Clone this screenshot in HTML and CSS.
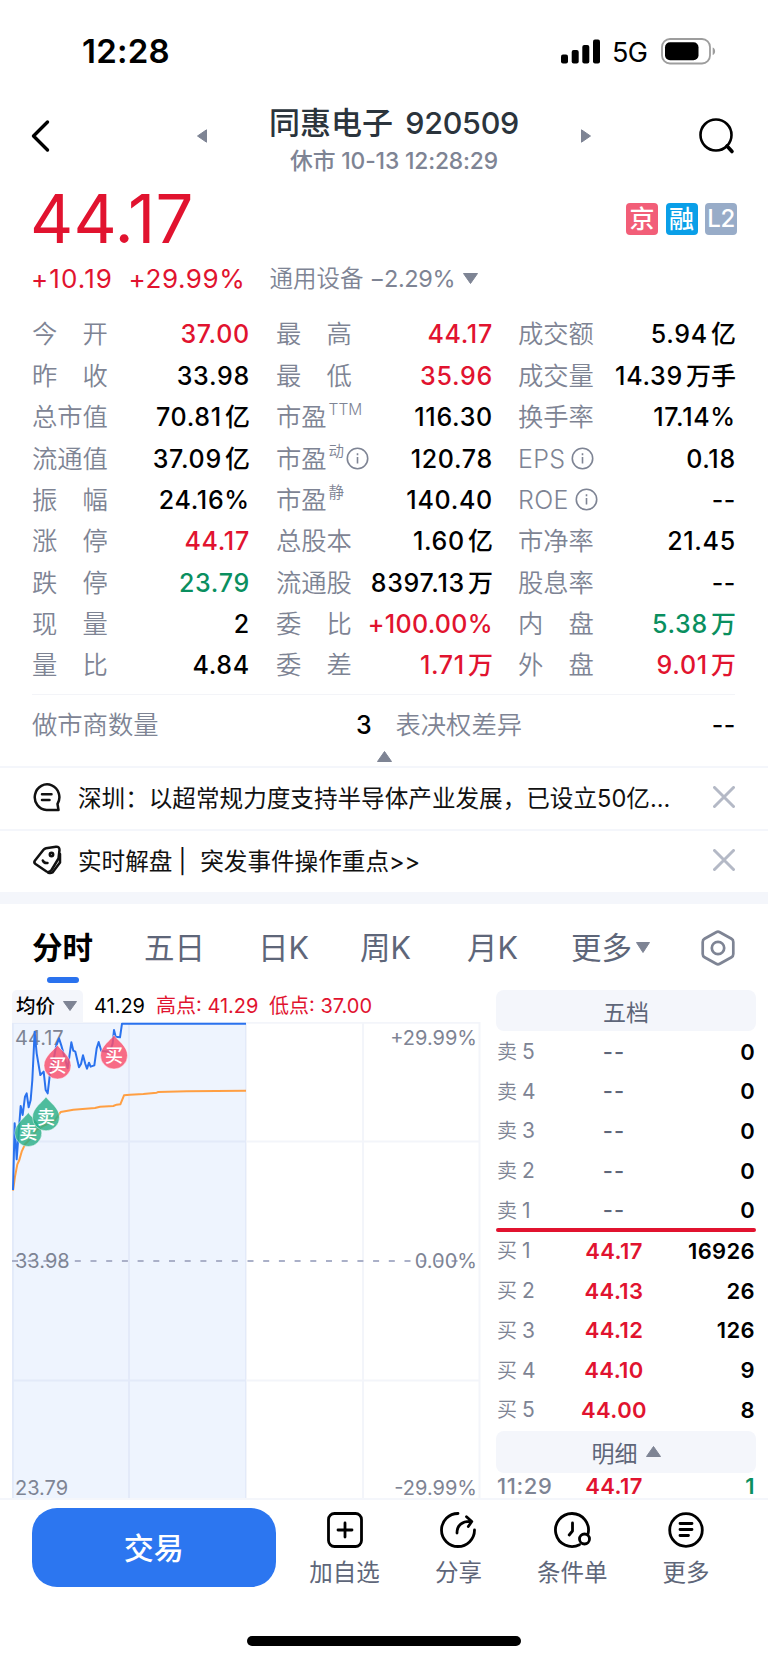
FILE: index.html
```html
<!DOCTYPE html>
<html lang="zh-CN">
<head>
<meta charset="utf-8">
<title>同惠电子 920509</title>
<link rel="stylesheet" href="styles.css">
</head>
<body>
<div class="status">
  <span class="clock">12:28</span>
  <div class="status-right">
    <svg class="signal" width="39" height="25" viewBox="0 0 39 25"><rect x="0" y="15.5" width="7" height="9" rx="2"/><rect x="10.7" y="11" width="7" height="13.5" rx="2"/><rect x="21.3" y="6" width="7" height="18.5" rx="2"/><rect x="32" y="0.5" width="7" height="24" rx="2"/></svg>
    <span class="net">5G</span>
    <svg class="battery" width="55" height="27" viewBox="0 0 55 27"><rect x="1" y="1" width="48" height="24.5" rx="8" fill="none" stroke="#9d9d9d" stroke-width="1.8"/><rect x="4" y="4.2" width="33.5" height="18" rx="5"/><path d="M51.7 9.500c3.200 1 3.200 6.500 0 7.500z" fill="#9d9d9d"/></svg>
  </div>
</div>

<header class="header">
  <svg class="back" width="22" height="36" viewBox="0 0 22 36"><path d="M18.500 4 4.500 18 18.500 32" fill="none" stroke="#000" stroke-width="3.400" stroke-linecap="round" stroke-linejoin="round"/></svg>
  <svg class="prev" width="10" height="14" viewBox="0 0 10 14"><path d="M9.500.800v12.400L.5 7z" class="tri"/></svg>
  <div class="title-box">
    <div class="title">同惠电子 <span class="code">920509</span></div>
    <div class="subtitle">休市 <span>10-13 12:28:29</span></div>
  </div>
  <svg class="next" width="10" height="14" viewBox="0 0 10 14"><path d="M.5.800v12.400L9.500 7z" class="tri"/></svg>
  <svg class="search" width="38" height="38" viewBox="0 0 38 38" fill="none" stroke="#000" stroke-linecap="round"><circle cx="18" cy="18" r="15.500" stroke-width="2.600"/><path d="m29 29 5 5.500" stroke-width="3.600"/></svg>
</header>

<section class="price-row">
  <span class="price">44.17</span>
  <div class="tags"><span class="tag jing">京</span><span class="tag rong">融</span><span class="tag level">L2</span></div>
</section>
<section class="change-row">
  <span class="chg a">+10.19</span><span class="chg b">+29.99%</span>
  <span class="sector">通用设备</span><span class="sector-v">−2.29%</span>
  <svg width="15" height="11" viewBox="0 0 15 11"><path d="M.5.500h14L7.500 10.500z" class="tri"/></svg>
</section>

<section class="quote">
  <dl class="col">
    <div><dt>今　开</dt><dd class="red">37.00</dd></div>
    <div><dt>昨　收</dt><dd>33.98</dd></div>
    <div><dt>总市值</dt><dd>70.81<i>亿</i></dd></div>
    <div><dt>流通值</dt><dd>37.09<i>亿</i></dd></div>
    <div><dt>振　幅</dt><dd>24.16%</dd></div>
    <div><dt>涨　停</dt><dd class="red">44.17</dd></div>
    <div><dt>跌　停</dt><dd class="green">23.79</dd></div>
    <div><dt>现　量</dt><dd>2</dd></div>
    <div><dt>量　比</dt><dd>4.84</dd></div>
  </dl>
  <dl class="col">
    <div><dt>最　高</dt><dd class="red">44.17</dd></div>
    <div><dt>最　低</dt><dd class="red">35.96</dd></div>
    <div><dt>市盈<sup>TTM</sup></dt><dd>116.30</dd></div>
    <div><dt>市盈<sup>动</sup><svg class="info" width="23" height="23" viewBox="0 0 23 23"><circle cx="11.500" cy="11.500" r="10.200"/><path d="M11.500 10v6.500M11.500 6.200v2"/></svg></dt><dd>120.78</dd></div>
    <div><dt>市盈<sup>静</sup></dt><dd>140.40</dd></div>
    <div><dt>总股本</dt><dd>1.60<i>亿</i></dd></div>
    <div><dt>流通股</dt><dd>8397.13<i>万</i></dd></div>
    <div><dt>委　比</dt><dd class="red long">+100.00%</dd></div>
    <div><dt>委　差</dt><dd class="red">1.71<i>万</i></dd></div>
  </dl>
  <dl class="col">
    <div><dt>成交额</dt><dd>5.94<i>亿</i></dd></div>
    <div><dt>成交量</dt><dd>14.39<i>万手</i></dd></div>
    <div><dt>换手率</dt><dd>17.14%</dd></div>
    <div><dt><span class="lat">EPS</span><svg class="info gap" width="23" height="23" viewBox="0 0 23 23"><circle cx="11.500" cy="11.500" r="10.200"/><path d="M11.500 10v6.500M11.500 6.200v2"/></svg></dt><dd>0.18</dd></div>
    <div><dt><span class="lat">ROE</span><svg class="info gap" width="23" height="23" viewBox="0 0 23 23"><circle cx="11.500" cy="11.500" r="10.200"/><path d="M11.500 10v6.500M11.500 6.200v2"/></svg></dt><dd class="dash">--</dd></div>
    <div><dt>市净率</dt><dd>21.45</dd></div>
    <div><dt>股息率</dt><dd class="dash">--</dd></div>
    <div><dt>内　盘</dt><dd class="green">5.38<i>万</i></dd></div>
    <div><dt>外　盘</dt><dd class="red">9.01<i>万</i></dd></div>
  </dl>
</section>
<dl class="extra">
  <div><dt>做市商数量</dt><dd>3</dd></div>
  <div><dt>表决权差异</dt><dd class="dash">--</dd></div>
</dl>
<div class="collapse"><svg width="15" height="11" viewBox="0 0 15 11"><path d="M.5 10.500h14L7.500.500z" class="tri"/></svg></div>

<div class="news">
  <svg width="30" height="30" viewBox="0 0 30 30" fill="none" stroke="#111" stroke-width="2.500" stroke-linecap="round" stroke-linejoin="round"><path d="M25.500 22A12.300 12.800 0 1 0 14.500 28H26.500z"/><path d="M10 12.300h9.500M10 18h7.500"/></svg>
  <span class="news-text">深圳：以超常规力度支持半导体产业发展，已设立50亿...</span>
  <svg class="close" width="22" height="22" viewBox="0 0 22 22"><path d="m1.500 1.500 19 19m0-19-19 19"/></svg>
</div>
<div class="news">
  <svg width="30" height="30" viewBox="0 0 30 30" fill="none" stroke="#111" stroke-width="2.500" stroke-linecap="round" stroke-linejoin="round"><path d="M14 3.200 24 1.800Q27.500 1.500 27.500 5L26.500 13.500 19.500 25Q17.500 28 14.500 26.500L3.500 19Q1.500 17.500 3 15.500L11.500 4.700Q12.500 3.500 14 3.200z"/><path d="M28 9V17.500L20.500 27.500Q18.500 28.500 16 27.500"/><circle cx="19.500" cy="9.500" r="1.700"/><path d="M10.800 15.500Q12 18.500 15.500 18"/></svg>
  <span class="news-text">实时解盘<span class="bar">|</span>突发事件操作重点&gt;&gt;</span>
  <svg class="close" width="22" height="22" viewBox="0 0 22 22"><path d="m1.500 1.500 19 19m0-19-19 19"/></svg>
</div>
<div class="band"></div>

<nav class="tabs">
  <span class="tab active">分时</span><span class="tab">五日</span><span class="tab">日K</span><span class="tab">周K</span><span class="tab">月K</span>
  <span class="tab more">更多<svg width="14" height="11" viewBox="0 0 14 11"><path d="M.5.500h13L7 10.500z" class="tri"/></svg></span>
  <svg class="hex" width="36" height="36" viewBox="0 0 36 36" fill="none" stroke="#7e8494" stroke-width="2.700" stroke-linejoin="round"><path d="M16.200 2.200Q18 1.200 19.800 2.200L31.500 8.800Q33.300 9.800 33.300 12V24Q33.300 26.200 31.500 27.200L19.800 33.800Q18 34.800 16.200 33.800L4.500 27.200Q2.700 26.200 2.700 24V12Q2.700 9.800 4.500 8.800z"/><circle cx="18" cy="18" r="6.200"/></svg>
</nav>

<main class="main">
  <section class="chart">
    <div class="legend">
      <span class="chip">均价<svg width="14" height="10" viewBox="0 0 14 10"><path d="M.5.500h13L7 9.500z" class="tri"/></svg></span>
      <span class="avg">41.29</span><span class="hi">高点: 41.29</span><span class="lo">低点: 37.00</span>
    </div>
    <svg class="plot" width="469" height="476" viewBox="12 1022 469 476">
      <g class="grid"><path d="M12 1022.800H480.500M12 1141.500H480M12 1380.500H480M129 1022V1498M246 1022V1498M363 1022V1498M479.500 1022V1498M12.800 1022V1498"/></g>
      <rect x="12" y="1023" width="234" height="475" fill="#2a72ee" fill-opacity=".08"/>
      <path d="M12 1261H458" class="mid"/>
      <g class="axis">
        <text x="15" y="1045">44.17</text><text x="15" y="1268.300">33.98</text><text x="15" y="1494.500">23.79</text>
        <g text-anchor="end"><text x="477" y="1045">+29.99%</text><text x="477" y="1268.300">0.00%</text><text x="477" y="1494.500">-29.99%</text></g>
      </g>
      <g transform="translate(0 980) scale(.33333)" fill="none" stroke-linejoin="round">
        <path stroke="#ff9f43" stroke-width="6" d="M39 632 45 590 52 553 58 540 65 515 75 493 90 478 110 450 135 435 165 420 182 396 220 389 285 384 300 380 340 378 350 374 361 373 372 346 390 344 430 342 470 338 475 336 560 334 738 332"/>
        <path stroke="#2a72ee" stroke-width="6" d="M39 630 44 430 50 538 62 378 68 405 75 350 80 340 86 382 92 360 97 300 104 155 110 220 121 285 131 275 137 330 143 340 150 280 158 255 168 200 177 175 185 200 203 265 208 230 214 187 220 212 226 215 237 262 243 252 249 226 256 252 261 266 267 248 272 260 283 256 290 205 296 186 304 213 330 215 338 190 342 150 347 170 360 172 366 131 738 131"/>
      </g>
      <defs><path id="drop" d="M0-20.500C3-15.500 13.500-9.500 13.500 0A13.500 13.500 0 0 1-13.500 0C-13.500-9.500-3-15.500 0-20.500z" stroke="#fff" stroke-opacity=".6" stroke-width=".8"/></defs>
      <g class="mark">
        <g transform="translate(28.300 1133)"><use href="#drop" class="sell"/><text y="6.300">卖</text></g>
        <g transform="translate(46 1117.300)"><use href="#drop" class="sell"/><text y="6.300">卖</text></g>
        <g transform="translate(57.500 1065.500)"><use href="#drop" class="buy"/><text y="6.300">买</text></g>
        <g transform="translate(114 1055.500)"><use href="#drop" class="buy"/><text y="6.300">买</text></g>
      </g>
    </svg>
  </section>
  <aside class="book">
    <div class="book-head">五档</div>
    <div class="lv"><span>卖<b>5</b></span><em class="none">--</em><strong>0</strong></div>
    <div class="lv"><span>卖<b>4</b></span><em class="none">--</em><strong>0</strong></div>
    <div class="lv"><span>卖<b>3</b></span><em class="none">--</em><strong>0</strong></div>
    <div class="lv"><span>卖<b>2</b></span><em class="none">--</em><strong>0</strong></div>
    <div class="lv"><span>卖<b>1</b></span><em class="none">--</em><strong>0</strong></div>
    <div class="split"></div>
    <div class="lv"><span>买<b>1</b></span><em>44.17</em><strong>16926</strong></div>
    <div class="lv"><span>买<b>2</b></span><em>44.13</em><strong>26</strong></div>
    <div class="lv"><span>买<b>3</b></span><em>44.12</em><strong>126</strong></div>
    <div class="lv"><span>买<b>4</b></span><em>44.10</em><strong>9</strong></div>
    <div class="lv"><span>买<b>5</b></span><em>44.00</em><strong>8</strong></div>
    <div class="book-head detail">明细<svg width="15" height="11" viewBox="0 0 15 11"><path d="M.5 10.500h14L7.500.500z" class="tri"/></svg></div>
    <div class="lv tick"><span class="time">11:29</span><em>44.17</em><strong class="green">1</strong></div>
  </aside>
</main>

<footer class="footer">
  <button class="trade">交易</button>
  <div class="act"><svg width="38" height="38" viewBox="0 0 38 38"><rect x="2.500" y="2.500" width="33" height="33" rx="6"/><path d="M19 12v14M12 19h14"/></svg>加自选</div>
  <div class="act"><svg width="38" height="38" viewBox="0 0 38 38"><path d="M19 2.500A16.500 16.500 0 1 0 35.500 19"/><path d="M18 22C18 14 23 10 32.500 10.500M27.500 5.800 32.800 10.500 29.300 15.500"/></svg>分享</div>
  <div class="act"><svg width="38" height="38" viewBox="0 0 38 38"><path d="M35 23A16.500 16.500 0 1 0 26.500 33.700"/><path d="M19.500 12V20L16.200 24"/><circle cx="31.500" cy="28" r="5"/></svg>条件单</div>
  <div class="act"><svg width="38" height="38" viewBox="0 0 38 38"><circle cx="19" cy="19" r="16.300"/><path d="M13 12.500h12M13 18.500h12M13 24.500h8.500"/></svg>更多</div>
</footer>
<div class="home"><span></span></div>
</body>
</html>
```
FILE: styles.css
```css
* { box-sizing: border-box; }
body, dl, dd { margin: 0; }
body {
  width: 768px;
  height: 1663px;
  overflow: hidden;
  background: #fff;
  color: #000;
  font-family: Inter, "Noto Sans CJK SC", sans-serif;
}
svg { display: block; flex: none; }
i, em { font-style: normal; }
.tri { fill: #7e8494; stroke: #7e8494; stroke-width: 1; stroke-linejoin: round; }
.red { color: #e1132f; }
.green { color: #0a8f5f; }

.status { display: flex; height: 102px; align-items: center; padding: 0 52px 0 82px; justify-content: space-between; }
.clock { font-size: 33px; font-weight: 600; letter-spacing: .2px; }
.status-right { display: flex; align-items: center; }
.net { width: 37px; margin: 2px 12px 0 12px; font-size: 27px; font-weight: 400; letter-spacing: -.7px; }

.header { display: flex; height: 78px; padding: 0 32px 0 29px; }
.back { margin-top: 16px; }
.prev { margin: 27px 0 0 146px; }
.title-box { width: 374px; text-align: center; }
.title { height: 40px; line-height: 41px; font-size: 31px; font-weight: 500; color: #2b343c; white-space: nowrap; }
.code { font-size: 30.500px; margin-left: 4px; letter-spacing: -.3px; }
.subtitle { height: 36px; line-height: 37px; font-size: 22.800px; color: #7e8494; font-weight: 500; white-space: nowrap; letter-spacing: -.15px; }
.next { margin-top: 27px; }
.search { margin: 15px 0 0 auto; }

.price-row { display: flex; height: 78px; padding: 0 31px 0 30px; align-items: center; justify-content: space-between; }
.price { font-size: 67px; color: #e1132f; letter-spacing: .1px; line-height: 78px; }
.tags { display: flex; gap: 7.500px; }
.tag { width: 32px; height: 32px; border-radius: 4px; color: #fff; font-size: 25px; line-height: 32px; text-align: center; font-weight: 500; }
.jing { background: #f25e78; }
.rong { background: #0a9fe8; }
.level { background: #98acc8; font-size: 24px; letter-spacing: -.5px; }
.change-row { display: flex; height: 42px; padding-left: 31px; align-items: center; color: #7e8494; font-size: 23.500px; line-height: 40px; padding-bottom: 1px; white-space: nowrap; }
.chg { color: #e1132f; font-size: 26px; }
.a { width: 97.500px; letter-spacing: 1.100px; }
.b { width: 141px; letter-spacing: .600px; }
.sector { width: 100px; font-weight: 350; }
.sector-v { width: 93px; letter-spacing: -.35px; }

.quote { display: grid; grid-template-columns: 244px 242px 217px; margin: 0 32px; padding-top: 13.800px; height: 394px; }
.col { width: 217px; }
.col:nth-child(2) { width: 216px; }
.col > div, .extra > div { display: flex; height: 41.370px; align-items: center; justify-content: space-between; white-space: nowrap; }
dt { display: flex; align-items: center; color: #7e8494; font-size: 25.300px; font-weight: 350; line-height: 40px; }
dd { font-size: 25px; font-weight: 500; line-height: 40px; letter-spacing: .700px; margin-right: -.9px; }
dd.long { letter-spacing: .3px; }
dd i { margin-left: 3px; letter-spacing: 0; }
dd.dash { letter-spacing: .5px; }
sup { align-self: flex-start; font-size: 15.500px; line-height: 26px; margin-left: 2px; }
.info { fill: none; stroke: #7e8494; stroke-width: 1.600; margin-left: 2px; }
.info.gap { margin-left: 6px; }
.lat { font-size: 25px; font-weight: 300; letter-spacing: .3px; }
.extra { display: flex; margin: 0 33px 0 32px; border-top: 1px solid #f3f4f8; height: 57px; align-items: center; padding-top: 4px; gap: 24px; }
.extra > div { flex: 1; }
.collapse { display: flex; justify-content: center; height: 15px; }

.news { display: flex; height: 63px; border-top: 2px solid #f4f6fb; padding: 0 33px 3px 32px; align-items: center; }
.news-text { margin-left: 16px; font-size: 23.600px; font-weight: 400; white-space: nowrap; color: #111; }
.bar { margin: 0 14px 0 6px; }
.close { margin-left: auto; fill: none; stroke: #b4b9c6; stroke-width: 3; stroke-linecap: round; }
.band { height: 12px; background: #f4f6fb; }

.tabs { display: flex; height: 86px; padding: 0 32px; color: #5e6679; font-size: 30.500px; line-height: 87px; }
.tab { position: relative; white-space: nowrap; width: 112px; }
.tab:nth-child(2) { width: 114px; }
.tab:nth-child(3) { width: 102px; }
.tab:nth-child(4) { width: 107px; }
.tab:nth-child(5) { width: 104px; }
.tab.active { color: #000; font-weight: 700; }
.tab.active::after { content: ""; position: absolute; left: 15px; bottom: 7px; width: 32px; height: 6px; border-radius: 3px; background: #2a72ee; }
.tab.more { display: flex; align-items: center; gap: 4px; }
.hex { margin: 26px 0 0 auto; }

.main { display: flex; height: 508px; overflow: hidden; padding: 0 12px; justify-content: space-between; }
.chart { width: 469px; }
.legend { display: flex; height: 32px; align-items: center; font-size: 20px; white-space: nowrap; line-height: 33px; }
.chip { display: flex; width: 71px; height: 32px; padding-left: 4px; gap: 8px; align-items: center; background: #f4f6fb; border-radius: 5px 5px 0 0; font-size: 19.500px; font-weight: 500; }
.avg { width: 62px; margin-left: 11px; }
.hi, .lo { color: #e1132f; }
.hi { width: 113px; }
.grid { fill: none; stroke: #f3f5fa; stroke-width: 2; }
.mid { stroke: #aab0c8; stroke-width: 2; stroke-dasharray: 6 9.700; }
.axis { fill: #7e8494; font-size: 20px; }
.mark text { fill: #fff; font-size: 18px; font-weight: 500; text-anchor: middle; }
.sell { fill: #2bb087; fill-opacity: .82; }
.buy { fill: #f8506f; fill-opacity: .84; }

.book { width: 260px; }
.book-head { display: flex; height: 41px; border-radius: 8px; background: #f4f6fb; align-items: center; justify-content: center; font-size: 23px; color: #5e6679; }
.lv { display: grid; grid-template-columns: 74px 86px 1fr; height: 39.700px; align-items: center; padding: 1px 1px 0; font-size: 22px; line-height: 39px; }
.lv span { color: #7e8494; font-size: 20px; font-weight: 350; white-space: nowrap; }
.lv b { font-weight: 400; font-size: 21px; margin-left: 5px; }
.lv em { color: #e1132f; font-weight: 600; text-align: center; letter-spacing: .400px; }
.lv em.none { color: #5e6679; font-weight: 500; letter-spacing: 1px; }
.lv strong { text-align: right; font-weight: 600; letter-spacing: .35px; }
.split { height: 4px; margin: -1.500px 0 -1.500px; border-radius: 2px; background: #e1132f; }
.detail { gap: 8px; margin-top: 2px; height: 42px; }
.lv.tick { height: 27px; line-height: 27px; padding-top: 0; }
.lv .time { font-size: 22px; font-weight: 500; letter-spacing: .6px; }

.footer { display: flex; height: 102px; border-top: 2px solid #f4f6fb; padding: 8px 25px 0 32px; }
.trade { width: 244px; height: 79px; border: 0; border-radius: 25px; background: #2c76f0; color: #fff; font: 500 30px/80px Inter, "Noto Sans CJK SC", sans-serif; margin-right: 12px; padding: 0; }
.act { display: flex; flex-direction: column; width: 114px; align-items: center; font-size: 23.500px; line-height: 36px; color: #5e6679; padding-top: 3px; }
.act svg { margin-bottom: 6px; fill: none; stroke: #000; stroke-width: 2.800; stroke-linecap: round; stroke-linejoin: round; }
.home { display: flex; justify-content: center; padding-top: 36px; }
.home span { width: 274px; height: 10px; border-radius: 5px; background: #000; }
```
